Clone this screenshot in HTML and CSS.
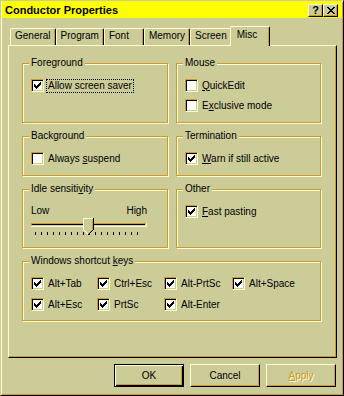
FILE: index.html
```html
<!doctype html>
<html lang="en">
<head>
  <meta charset="utf-8">
  <title>Conductor Properties</title>
  <link rel="stylesheet" href="styles.css">
</head>
<body>

<div class="window">

  <div class="titlebar">
    <span class="title">Conductor Properties</span>
    <span class="capbtn">?</span>
    <span class="capbtn">
      <svg width="8" height="7" viewBox="0 0 8 7" shape-rendering="crispEdges"><path d="M0 0h2v1H0z M6 0h2v1H6z M1 1h2v1H1z M5 1h2v1H5z M2 2h4v1H2z M3 3h2v1H3z M2 4h4v1H2z M1 5h2v1H1z M5 5h2v1H5z M0 6h2v1H0z M6 6h2v1H6z"/></svg>
    </span>
  </div>

  <div class="tabs">
    <span class="tab">General</span>
    <span class="tab">Program</span>
    <span class="tab">Font</span>
    <span class="tab">Memory</span>
    <span class="tab">Screen</span>
    <span class="tab active">Misc</span>
  </div>

  <div class="panel">

    <div class="group">
      <div class="legend">Foreground</div>
      <div class="rows">
        <div class="check">
          <span class="box"><svg width="7" height="7" viewBox="0 0 7 7" shape-rendering="crispEdges"><path d="M6 0h1v3H6z M5 1h1v3H5z M4 2h1v3H4z M3 3h1v3H3z M2 4h1v3H2z M1 3h1v3H1z M0 2h1v3H0z"/></svg></span>
          <span class="label focus">Allow screen saver</span>
        </div>
      </div>
    </div>

    <div class="group">
      <div class="legend">Mouse</div>
      <div class="rows">
        <div class="check">
          <span class="box"></span>
          <span class="label"><u>Q</u>uickEdit</span>
        </div>
        <div class="check">
          <span class="box"></span>
          <span class="label">E<u>x</u>clusive mode</span>
        </div>
      </div>
    </div>

    <div class="group">
      <div class="legend">Background</div>
      <div class="rows">
        <div class="check">
          <span class="box"></span>
          <span class="label">Always <u>s</u>uspend</span>
        </div>
      </div>
    </div>

    <div class="group">
      <div class="legend">Termination</div>
      <div class="rows">
        <div class="check">
          <span class="box"><svg width="7" height="7" viewBox="0 0 7 7" shape-rendering="crispEdges"><path d="M6 0h1v3H6z M5 1h1v3H5z M4 2h1v3H4z M3 3h1v3H3z M2 4h1v3H2z M1 3h1v3H1z M0 2h1v3H0z"/></svg></span>
          <span class="label"><u>W</u>arn if still active</span>
        </div>
      </div>
    </div>

    <div class="group">
      <div class="legend">Idle sensiti<u>v</u>ity</div>
      <div class="scale">
        <span>Low</span>
        <span>High</span>
      </div>
      <svg class="slider" width="116" height="18" viewBox="0 0 116 18" shape-rendering="crispEdges">
        <!-- channel -->
        <path fill="#cc9933" d="M0 5h115v1H0z M0 6h1v2H0z"/>
        <path fill="#000" d="M1 6h113v1H1z"/>
        <path fill="#ffffcc" d="M0 8h116v1H0z M115 5h1v3h-1z"/>
        <!-- ticks -->
        <path stroke="#000" stroke-width="1" d="M4.5 14v3m6-3v3m6-3v3m6-3v3m6-3v3m6-3v3m6-3v3m6-3v3m6-3v3m6-3v3m6-3v3m6-3v3m6-3v3m6-3v3m6-3v3m6-3v3m6-3v3m6-3v3"/>
        <!-- thumb -->
        <path fill="#cccc99" d="M52 0h11v12h-1v1h-1v1h-1v1h-1v1h-1v1h-1v-1h-1v-1h-1v-1h-1v-1h-1v-1h-1z"/>
        <path fill="#ffffcc" d="M52 0h10v1H53v11h-1z M53 12h1v1h-1z M54 13h1v1h-1z M55 14h1v1h-1z M56 15h1v1h-1z"/>
        <path fill="#cc9933" d="M61 1h1v11h-1z M60 12h1v1h-1z M59 13h1v1h-1z M58 14h1v1h-1z M57 15h1v1h-1z"/>
        <path fill="#000" d="M62 0h1v12h-1z M61 12h1v1h-1z M60 13h1v1h-1z M59 14h1v1h-1z M58 15h1v1h-1z M57 16h1v1h-1z"/>
      </svg>
    </div>

    <div class="group">
      <div class="legend">Other</div>
      <div class="rows">
        <div class="check">
          <span class="box"><svg width="7" height="7" viewBox="0 0 7 7" shape-rendering="crispEdges"><path d="M6 0h1v3H6z M5 1h1v3H5z M4 2h1v3H4z M3 3h1v3H3z M2 4h1v3H2z M1 3h1v3H1z M0 2h1v3H0z"/></svg></span>
          <span class="label"><u>F</u>ast pasting</span>
        </div>
      </div>
    </div>

    <div class="group wide">
      <div class="legend">Windows shortcut <u>k</u>eys</div>
      <div class="keys">
        <div class="check">
          <span class="box"><svg width="7" height="7" viewBox="0 0 7 7" shape-rendering="crispEdges"><path d="M6 0h1v3H6z M5 1h1v3H5z M4 2h1v3H4z M3 3h1v3H3z M2 4h1v3H2z M1 3h1v3H1z M0 2h1v3H0z"/></svg></span>
          <span class="label">Alt+Tab</span>
        </div>
        <div class="check">
          <span class="box"><svg width="7" height="7" viewBox="0 0 7 7" shape-rendering="crispEdges"><path d="M6 0h1v3H6z M5 1h1v3H5z M4 2h1v3H4z M3 3h1v3H3z M2 4h1v3H2z M1 3h1v3H1z M0 2h1v3H0z"/></svg></span>
          <span class="label">Ctrl+Esc</span>
        </div>
        <div class="check">
          <span class="box"><svg width="7" height="7" viewBox="0 0 7 7" shape-rendering="crispEdges"><path d="M6 0h1v3H6z M5 1h1v3H5z M4 2h1v3H4z M3 3h1v3H3z M2 4h1v3H2z M1 3h1v3H1z M0 2h1v3H0z"/></svg></span>
          <span class="label">Alt-PrtSc</span>
        </div>
        <div class="check">
          <span class="box"><svg width="7" height="7" viewBox="0 0 7 7" shape-rendering="crispEdges"><path d="M6 0h1v3H6z M5 1h1v3H5z M4 2h1v3H4z M3 3h1v3H3z M2 4h1v3H2z M1 3h1v3H1z M0 2h1v3H0z"/></svg></span>
          <span class="label">Alt+Space</span>
        </div>
        <div class="check">
          <span class="box"><svg width="7" height="7" viewBox="0 0 7 7" shape-rendering="crispEdges"><path d="M6 0h1v3H6z M5 1h1v3H5z M4 2h1v3H4z M3 3h1v3H3z M2 4h1v3H2z M1 3h1v3H1z M0 2h1v3H0z"/></svg></span>
          <span class="label">Alt+Esc</span>
        </div>
        <div class="check">
          <span class="box"><svg width="7" height="7" viewBox="0 0 7 7" shape-rendering="crispEdges"><path d="M6 0h1v3H6z M5 1h1v3H5z M4 2h1v3H4z M3 3h1v3H3z M2 4h1v3H2z M1 3h1v3H1z M0 2h1v3H0z"/></svg></span>
          <span class="label">PrtSc</span>
        </div>
        <div class="check">
          <span class="box"><svg width="7" height="7" viewBox="0 0 7 7" shape-rendering="crispEdges"><path d="M6 0h1v3H6z M5 1h1v3H5z M4 2h1v3H4z M3 3h1v3H3z M2 4h1v3H2z M1 3h1v3H1z M0 2h1v3H0z"/></svg></span>
          <span class="label">Alt-Enter</span>
        </div>
      </div>
    </div>

  </div>

  <div class="buttons">
    <span class="btn default">OK</span>
    <span class="btn">Cancel</span>
    <span class="btn disabled"><u>A</u>pply</span>
  </div>

</div>

</body>
</html>
```

FILE: styles.css
```css
body { margin: 0; background: #cccc99; color: #000; font: 10px "Liberation Sans", Arial, sans-serif; }

/* window frame */
.window {
  width: 344px; height: 396px; box-sizing: border-box;
  border: 1px solid; border-color: #cccc99 #000 #000 #cccc99;
  box-shadow: inset 1px 1px #ffffcc, inset -1px -1px #cc9933;
  padding: 0 1px 1px 1px;
}

.titlebar { height: 17px; background: #ffff00; display: flex; align-items: center; padding: 0 4px 0 3px; }
.title { flex: 1; font-size: 11px; font-weight: bold; }
.capbtn {
  width: 15px; height: 13px; box-sizing: border-box; margin-top: 2px;
  display: flex; align-items: center; justify-content: center;
  background: #cccc99; font-size: 11px; font-weight: bold; line-height: 1;
  border: 1px solid; border-color: #ffffcc #000 #000 #ffffcc;
  box-shadow: inset -1px -1px #cc9933;
}

/* tabs */
.tabs { display: flex; align-items: flex-end; height: 19px; margin: 8px 0 0 8px; }
.tab {
  height: 17px; min-width: 40px; box-sizing: border-box; padding: 1px 4px 0;
  line-height: 12px; white-space: nowrap;
  border: 1px solid; border-bottom: 0; border-color: #ffffcc #000 transparent #ffffcc;
  border-radius: 2px 2px 0 0;
  box-shadow: inset -1px 0 #cc9933;
}
.tab.active {
  height: 20px; margin: 0 -2px -1px; padding: 2px 6px 0;
  position: relative; z-index: 1; background: #cccc99;
}

.panel {
  height: 313px; box-sizing: border-box; margin: 0 5px 0 6px;
  border: 1px solid; border-color: #ffffcc #000 #000 #ffffcc;
  box-shadow: inset -1px -1px #cc9933;
  padding: 17px 0 0 13px;
  display: grid; grid-template-columns: 146px 145px; grid-template-rows: 60px 40px 59px 60px;
  gap: 13px 8px; align-content: start;
}

/* group boxes */
.group {
  box-sizing: border-box; padding: 0 8px;
  border: 1px solid #cc9933;
  box-shadow: inset 1px 1px #ffffcc, 1px 1px #ffffcc;
}
.group.wide { grid-column: 1 / -1; }
.legend { display: table; margin: -7px 0 0 -2px; padding: 0 2px; background: #cccc99; line-height: 12px; }

.rows { display: flex; flex-direction: column; gap: 7px; margin-top: 10px; }
.keys { display: grid; grid-template-columns: 66px 67px 68px auto; row-gap: 8px; margin-top: 10px; }

.check { display: flex; align-items: center; height: 13px; }
.box {
  width: 13px; height: 13px; box-sizing: border-box; flex: none;
  display: flex; align-items: center; justify-content: center;
  background: #fff;
  border: 1px solid; border-color: #cc9933 #ffffcc #ffffcc #cc9933;
  box-shadow: inset 1px 1px #000, inset -1px -1px #cccc99;
}
.label { margin-left: 2px; padding: 0 1px; line-height: 12px; border: 1px solid transparent; white-space: nowrap; }
.label.focus { border: 1px dotted #000; }

.scale { display: flex; justify-content: space-between; width: 116px; margin-top: 10px; line-height: 12px; }
.slider { display: block; margin-top: 1px; }

/* dialog buttons */
.buttons { display: flex; justify-content: flex-end; gap: 6px; margin: 6px 6px 0 0; }
.btn {
  width: 70px; height: 23px; box-sizing: border-box;
  display: flex; align-items: center; justify-content: center;
  border: 1px solid; border-color: #ffffcc #000 #000 #ffffcc;
  box-shadow: inset -1px -1px #cc9933;
}
.btn.default { border-color: #000; box-shadow: inset 1px 1px #ffffcc, inset -1px -1px #000, inset -2px -2px #cc9933; }
.btn.disabled { color: #cc9933; text-shadow: 1px 1px #ffffcc; }
```
